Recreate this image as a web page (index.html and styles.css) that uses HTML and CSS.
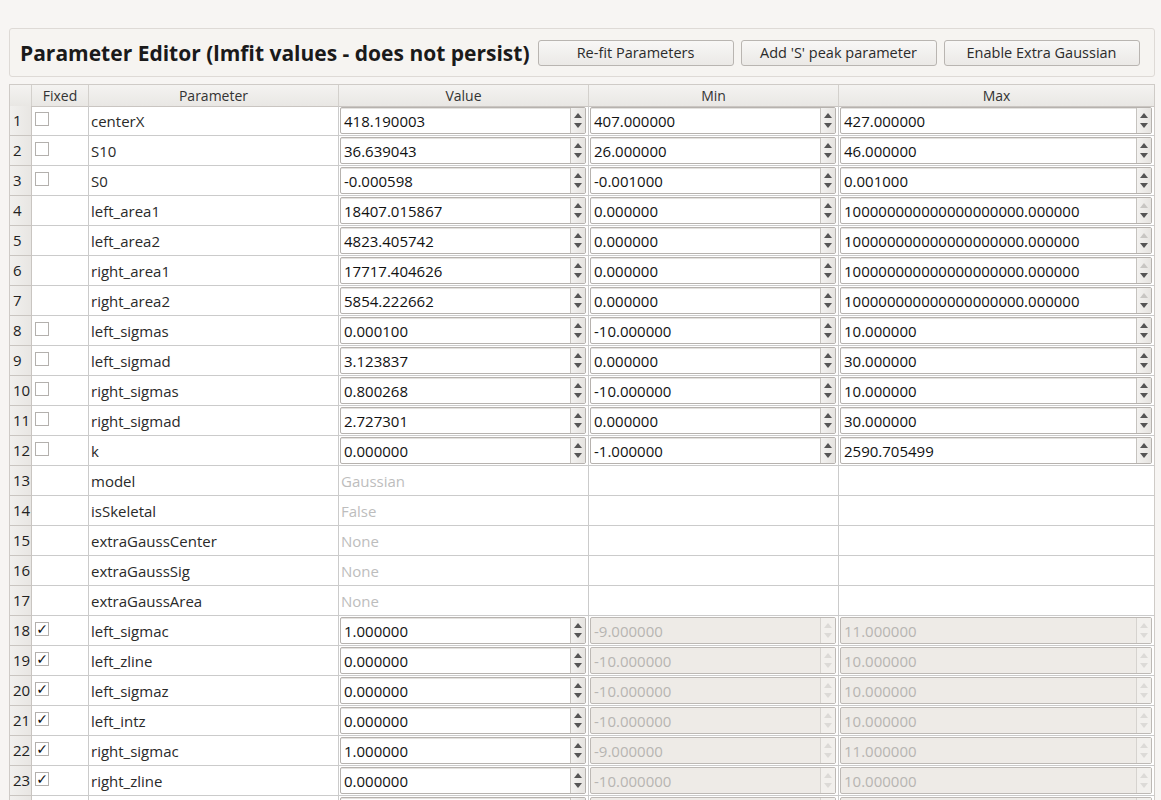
FILE: index.html
```html
<!DOCTYPE html>
<html>
<head>
<meta charset="utf-8">
<link rel="stylesheet" href="styles.css">
</head>
<body>
<div class="page">
  <div class="group">
    <div class="title">Parameter Editor (lmfit values - does not persist)</div>
    <div class="buttons">
      <button class="btn">Re-fit Parameters</button>
      <button class="btn">Add 'S' peak parameter</button>
      <button class="btn">Enable Extra Gaussian</button>
    </div>
  </div>
  <div class="table">
    <div class="hrow">
      <div class="hc corner"></div>
      <div class="hc">Fixed</div>
      <div class="hc">Parameter</div>
      <div class="hc">Value</div>
      <div class="hc">Min</div>
      <div class="hc">Max</div>
    </div>

    <div class="row"><div class="num">1</div><div class="cell fx"><span class="cb"></span></div><div class="cell name">centerX</div>
      <div class="cell"><div class="spin"><span class="sv">418.190003</span><span class="arr"><i class="up"></i><i class="dn"></i></span></div></div>
      <div class="cell"><div class="spin"><span class="sv">407.000000</span><span class="arr"><i class="up"></i><i class="dn"></i></span></div></div>
      <div class="cell"><div class="spin"><span class="sv">427.000000</span><span class="arr"><i class="up"></i><i class="dn"></i></span></div></div></div>

    <div class="row"><div class="num">2</div><div class="cell fx"><span class="cb"></span></div><div class="cell name">S10</div>
      <div class="cell"><div class="spin"><span class="sv">36.639043</span><span class="arr"><i class="up"></i><i class="dn"></i></span></div></div>
      <div class="cell"><div class="spin"><span class="sv">26.000000</span><span class="arr"><i class="up"></i><i class="dn"></i></span></div></div>
      <div class="cell"><div class="spin"><span class="sv">46.000000</span><span class="arr"><i class="up"></i><i class="dn"></i></span></div></div></div>

    <div class="row"><div class="num">3</div><div class="cell fx"><span class="cb"></span></div><div class="cell name">S0</div>
      <div class="cell"><div class="spin"><span class="sv">-0.000598</span><span class="arr"><i class="up"></i><i class="dn"></i></span></div></div>
      <div class="cell"><div class="spin"><span class="sv">-0.001000</span><span class="arr"><i class="up"></i><i class="dn"></i></span></div></div>
      <div class="cell"><div class="spin"><span class="sv">0.001000</span><span class="arr"><i class="up"></i><i class="dn"></i></span></div></div></div>

    <div class="row"><div class="num">4</div><div class="cell fx"></div><div class="cell name">left_area1</div>
      <div class="cell"><div class="spin"><span class="sv">18407.015867</span><span class="arr"><i class="up"></i><i class="dn"></i></span></div></div>
      <div class="cell"><div class="spin"><span class="sv">0.000000</span><span class="arr"><i class="up"></i><i class="dn"></i></span></div></div>
      <div class="cell"><div class="spin"><span class="sv">100000000000000000000.000000</span><span class="arr"><i class="up off"></i><i class="dn"></i></span></div></div></div>

    <div class="row"><div class="num">5</div><div class="cell fx"></div><div class="cell name">left_area2</div>
      <div class="cell"><div class="spin"><span class="sv">4823.405742</span><span class="arr"><i class="up"></i><i class="dn"></i></span></div></div>
      <div class="cell"><div class="spin"><span class="sv">0.000000</span><span class="arr"><i class="up"></i><i class="dn"></i></span></div></div>
      <div class="cell"><div class="spin"><span class="sv">100000000000000000000.000000</span><span class="arr"><i class="up off"></i><i class="dn"></i></span></div></div></div>

    <div class="row"><div class="num">6</div><div class="cell fx"></div><div class="cell name">right_area1</div>
      <div class="cell"><div class="spin"><span class="sv">17717.404626</span><span class="arr"><i class="up"></i><i class="dn"></i></span></div></div>
      <div class="cell"><div class="spin"><span class="sv">0.000000</span><span class="arr"><i class="up"></i><i class="dn"></i></span></div></div>
      <div class="cell"><div class="spin"><span class="sv">100000000000000000000.000000</span><span class="arr"><i class="up off"></i><i class="dn"></i></span></div></div></div>

    <div class="row"><div class="num">7</div><div class="cell fx"></div><div class="cell name">right_area2</div>
      <div class="cell"><div class="spin"><span class="sv">5854.222662</span><span class="arr"><i class="up"></i><i class="dn"></i></span></div></div>
      <div class="cell"><div class="spin"><span class="sv">0.000000</span><span class="arr"><i class="up"></i><i class="dn"></i></span></div></div>
      <div class="cell"><div class="spin"><span class="sv">100000000000000000000.000000</span><span class="arr"><i class="up off"></i><i class="dn"></i></span></div></div></div>

    <div class="row"><div class="num">8</div><div class="cell fx"><span class="cb"></span></div><div class="cell name">left_sigmas</div>
      <div class="cell"><div class="spin"><span class="sv">0.000100</span><span class="arr"><i class="up"></i><i class="dn"></i></span></div></div>
      <div class="cell"><div class="spin"><span class="sv">-10.000000</span><span class="arr"><i class="up"></i><i class="dn"></i></span></div></div>
      <div class="cell"><div class="spin"><span class="sv">10.000000</span><span class="arr"><i class="up"></i><i class="dn"></i></span></div></div></div>

    <div class="row"><div class="num">9</div><div class="cell fx"><span class="cb"></span></div><div class="cell name">left_sigmad</div>
      <div class="cell"><div class="spin"><span class="sv">3.123837</span><span class="arr"><i class="up"></i><i class="dn"></i></span></div></div>
      <div class="cell"><div class="spin"><span class="sv">0.000000</span><span class="arr"><i class="up"></i><i class="dn"></i></span></div></div>
      <div class="cell"><div class="spin"><span class="sv">30.000000</span><span class="arr"><i class="up"></i><i class="dn"></i></span></div></div></div>

    <div class="row"><div class="num">10</div><div class="cell fx"><span class="cb"></span></div><div class="cell name">right_sigmas</div>
      <div class="cell"><div class="spin"><span class="sv">0.800268</span><span class="arr"><i class="up"></i><i class="dn"></i></span></div></div>
      <div class="cell"><div class="spin"><span class="sv">-10.000000</span><span class="arr"><i class="up"></i><i class="dn"></i></span></div></div>
      <div class="cell"><div class="spin"><span class="sv">10.000000</span><span class="arr"><i class="up"></i><i class="dn"></i></span></div></div></div>

    <div class="row"><div class="num">11</div><div class="cell fx"><span class="cb"></span></div><div class="cell name">right_sigmad</div>
      <div class="cell"><div class="spin"><span class="sv">2.727301</span><span class="arr"><i class="up"></i><i class="dn"></i></span></div></div>
      <div class="cell"><div class="spin"><span class="sv">0.000000</span><span class="arr"><i class="up"></i><i class="dn"></i></span></div></div>
      <div class="cell"><div class="spin"><span class="sv">30.000000</span><span class="arr"><i class="up"></i><i class="dn"></i></span></div></div></div>

    <div class="row"><div class="num">12</div><div class="cell fx"><span class="cb"></span></div><div class="cell name">k</div>
      <div class="cell"><div class="spin"><span class="sv">0.000000</span><span class="arr"><i class="up"></i><i class="dn"></i></span></div></div>
      <div class="cell"><div class="spin"><span class="sv">-1.000000</span><span class="arr"><i class="up"></i><i class="dn"></i></span></div></div>
      <div class="cell"><div class="spin"><span class="sv">2590.705499</span><span class="arr"><i class="up"></i><i class="dn"></i></span></div></div></div>

    <div class="row"><div class="num">13</div><div class="cell fx"></div><div class="cell name">model</div>
      <div class="cell ro">Gaussian</div><div class="cell"></div><div class="cell"></div></div>
    <div class="row"><div class="num">14</div><div class="cell fx"></div><div class="cell name">isSkeletal</div>
      <div class="cell ro">False</div><div class="cell"></div><div class="cell"></div></div>
    <div class="row"><div class="num">15</div><div class="cell fx"></div><div class="cell name">extraGaussCenter</div>
      <div class="cell ro">None</div><div class="cell"></div><div class="cell"></div></div>
    <div class="row"><div class="num">16</div><div class="cell fx"></div><div class="cell name">extraGaussSig</div>
      <div class="cell ro">None</div><div class="cell"></div><div class="cell"></div></div>
    <div class="row"><div class="num">17</div><div class="cell fx"></div><div class="cell name">extraGaussArea</div>
      <div class="cell ro">None</div><div class="cell"></div><div class="cell"></div></div>

    <div class="row"><div class="num">18</div><div class="cell fx"><span class="cb on">✓</span></div><div class="cell name">left_sigmac</div>
      <div class="cell"><div class="spin"><span class="sv">1.000000</span><span class="arr"><i class="up"></i><i class="dn"></i></span></div></div>
      <div class="cell"><div class="spin dis"><span class="sv">-9.000000</span><span class="arr"><i class="up"></i><i class="dn"></i></span></div></div>
      <div class="cell"><div class="spin dis"><span class="sv">11.000000</span><span class="arr"><i class="up"></i><i class="dn"></i></span></div></div></div>

    <div class="row"><div class="num">19</div><div class="cell fx"><span class="cb on">✓</span></div><div class="cell name">left_zline</div>
      <div class="cell"><div class="spin"><span class="sv">0.000000</span><span class="arr"><i class="up"></i><i class="dn"></i></span></div></div>
      <div class="cell"><div class="spin dis"><span class="sv">-10.000000</span><span class="arr"><i class="up"></i><i class="dn"></i></span></div></div>
      <div class="cell"><div class="spin dis"><span class="sv">10.000000</span><span class="arr"><i class="up"></i><i class="dn"></i></span></div></div></div>

    <div class="row"><div class="num">20</div><div class="cell fx"><span class="cb on">✓</span></div><div class="cell name">left_sigmaz</div>
      <div class="cell"><div class="spin"><span class="sv">0.000000</span><span class="arr"><i class="up"></i><i class="dn"></i></span></div></div>
      <div class="cell"><div class="spin dis"><span class="sv">-10.000000</span><span class="arr"><i class="up"></i><i class="dn"></i></span></div></div>
      <div class="cell"><div class="spin dis"><span class="sv">10.000000</span><span class="arr"><i class="up"></i><i class="dn"></i></span></div></div></div>

    <div class="row"><div class="num">21</div><div class="cell fx"><span class="cb on">✓</span></div><div class="cell name">left_intz</div>
      <div class="cell"><div class="spin"><span class="sv">0.000000</span><span class="arr"><i class="up"></i><i class="dn"></i></span></div></div>
      <div class="cell"><div class="spin dis"><span class="sv">-10.000000</span><span class="arr"><i class="up"></i><i class="dn"></i></span></div></div>
      <div class="cell"><div class="spin dis"><span class="sv">10.000000</span><span class="arr"><i class="up"></i><i class="dn"></i></span></div></div></div>

    <div class="row"><div class="num">22</div><div class="cell fx"><span class="cb on">✓</span></div><div class="cell name">right_sigmac</div>
      <div class="cell"><div class="spin"><span class="sv">1.000000</span><span class="arr"><i class="up"></i><i class="dn"></i></span></div></div>
      <div class="cell"><div class="spin dis"><span class="sv">-9.000000</span><span class="arr"><i class="up"></i><i class="dn"></i></span></div></div>
      <div class="cell"><div class="spin dis"><span class="sv">11.000000</span><span class="arr"><i class="up"></i><i class="dn"></i></span></div></div></div>

    <div class="row"><div class="num">23</div><div class="cell fx"><span class="cb on">✓</span></div><div class="cell name">right_zline</div>
      <div class="cell"><div class="spin"><span class="sv">0.000000</span><span class="arr"><i class="up"></i><i class="dn"></i></span></div></div>
      <div class="cell"><div class="spin dis"><span class="sv">-10.000000</span><span class="arr"><i class="up"></i><i class="dn"></i></span></div></div>
      <div class="cell"><div class="spin dis"><span class="sv">10.000000</span><span class="arr"><i class="up"></i><i class="dn"></i></span></div></div></div>

    <div class="row"><div class="num"></div><div class="cell fx"></div><div class="cell name"></div>
      <div class="cell"><div class="spin"><span class="sv"></span><span class="arr"></span></div></div>
      <div class="cell"><div class="spin dis"><span class="sv"></span><span class="arr"></span></div></div>
      <div class="cell"><div class="spin dis"><span class="sv"></span><span class="arr"></span></div></div></div>
  </div>
</div>
</body>
</html>
```
FILE: styles.css
```css
html, body {
  margin: 0;
  padding: 0;
  height: 800px;
  overflow: hidden;
  background: #f7f5f3;
  font-family: "Open Sans", "DejaVu Sans", sans-serif;
  color: #1e1e1e;
}

.page {
  padding: 28px 6px 0 9px;
}

.group {
  display: flex;
  align-items: center;
  height: 47px;
  border: 1px solid #dedad6;
  border-radius: 3px;
  background: #f6f4f1;
  padding-left: 10px;
}

.title {
  font-weight: 700;
  font-size: 21px;
  color: #1a1a1a;
  white-space: nowrap;
}

.buttons {
  display: flex;
  gap: 7px;
  margin-left: 8px;
}

.btn {
  width: 196px;
  height: 26px;
  border: 1px solid #b9b5b1;
  border-radius: 3px;
  background: linear-gradient(#f8f7f6, #ebe9e6);
  font-family: "Open Sans", "DejaVu Sans", sans-serif;
  font-size: 14.5px;
  color: #2b2b2b;
  padding: 0;
}

.table {
  margin-top: 7px;
  width: 1144px;
  background: #fff;
  border-left: 1px solid #cfcbc7;
  border-right: 1px solid #cfcbc7;
}

.hrow, .row {
  display: grid;
  grid-template-columns: 22px 57px 250px 250px 250px 315px;
}

.hrow {
  height: 21px;
  border-top: 1px solid #cfcbc7;
}

.hc {
  background: linear-gradient(#f4f3f1, #e9e7e4);
  border-right: 1px solid #d3d0cc;
  border-bottom: 1px solid #c9c5c1;
  font-size: 14px;
  color: #333;
  text-align: center;
  line-height: 21px;
}

.hc:last-child { border-right: none; }

.row {
  height: 30px;
}

.num {
  background: linear-gradient(90deg, #f1f0ee, #e8e6e3);
  border-right: 1px solid #c9c5c1;
  border-bottom: 1px solid #c9c5c1;
  font-size: 15px;
  color: #222;
  line-height: 29px;
  padding-left: 3px;
  overflow: hidden;
  white-space: nowrap;
}

.cell {
  border-right: 1px solid #cbcbcb;
  border-bottom: 1px solid #cbcbcb;
  display: flex;
  align-items: center;
  font-size: 15px;
  overflow: hidden;
  white-space: nowrap;
}

.row .cell:last-child { border-right: none; }

.name {
  padding-left: 2px;
  color: #2a2a2a;
}

.ro {
  padding-left: 2px;
  color: #bdbdbd;
}

.fx {
  padding-left: 3px;
}

.cb {
  width: 12px;
  height: 12px;
  border: 1px solid #b3b0ad;
  background: #fff;
  margin-top: -3px;
  font-size: 14px;
  line-height: 13px;
  text-align: center;
  color: #111;
  font-family: "DejaVu Sans", sans-serif;
  font-weight: 700;
}

.spin {
  flex: 1;
  align-self: stretch;
  margin: 1px 2px 1px 1px;
  border: 1px solid #b6b2ae;
  border-radius: 2px;
  background: #fff;
  display: flex;
  align-items: stretch;
  box-shadow: inset 0 1px 0 #e4e2df;
}

.sv {
  flex: 1;
  padding-left: 3px;
  display: flex;
  align-items: center;
  color: #111;
  overflow: hidden;
}

.arr {
  width: 14px;
  border-left: 1px solid #c6c3bf;
  background: linear-gradient(90deg, #f3f2f0, #e6e4e1);
  display: flex;
  flex-direction: column;
  align-items: center;
  justify-content: center;
  gap: 5px;
}

.up, .dn {
  width: 0;
  height: 0;
  border-left: 4px solid transparent;
  border-right: 4px solid transparent;
}

.up { border-bottom: 5px solid #555; }
.dn { border-top: 5px solid #555; }
.up.off { border-bottom-color: #c8c6c3; }

.spin.dis {
  background: #eeebe7;
  border-color: #bdb9b5;
  box-shadow: none;
}

.spin.dis .sv { color: #b7b5b2; }
.spin.dis .arr { background: #f2f0ed; border-left-color: #d6d3cf; }
.spin.dis .up { border-bottom-color: #dcdad7; }
.spin.dis .dn { border-top-color: #dcdad7; }
```
